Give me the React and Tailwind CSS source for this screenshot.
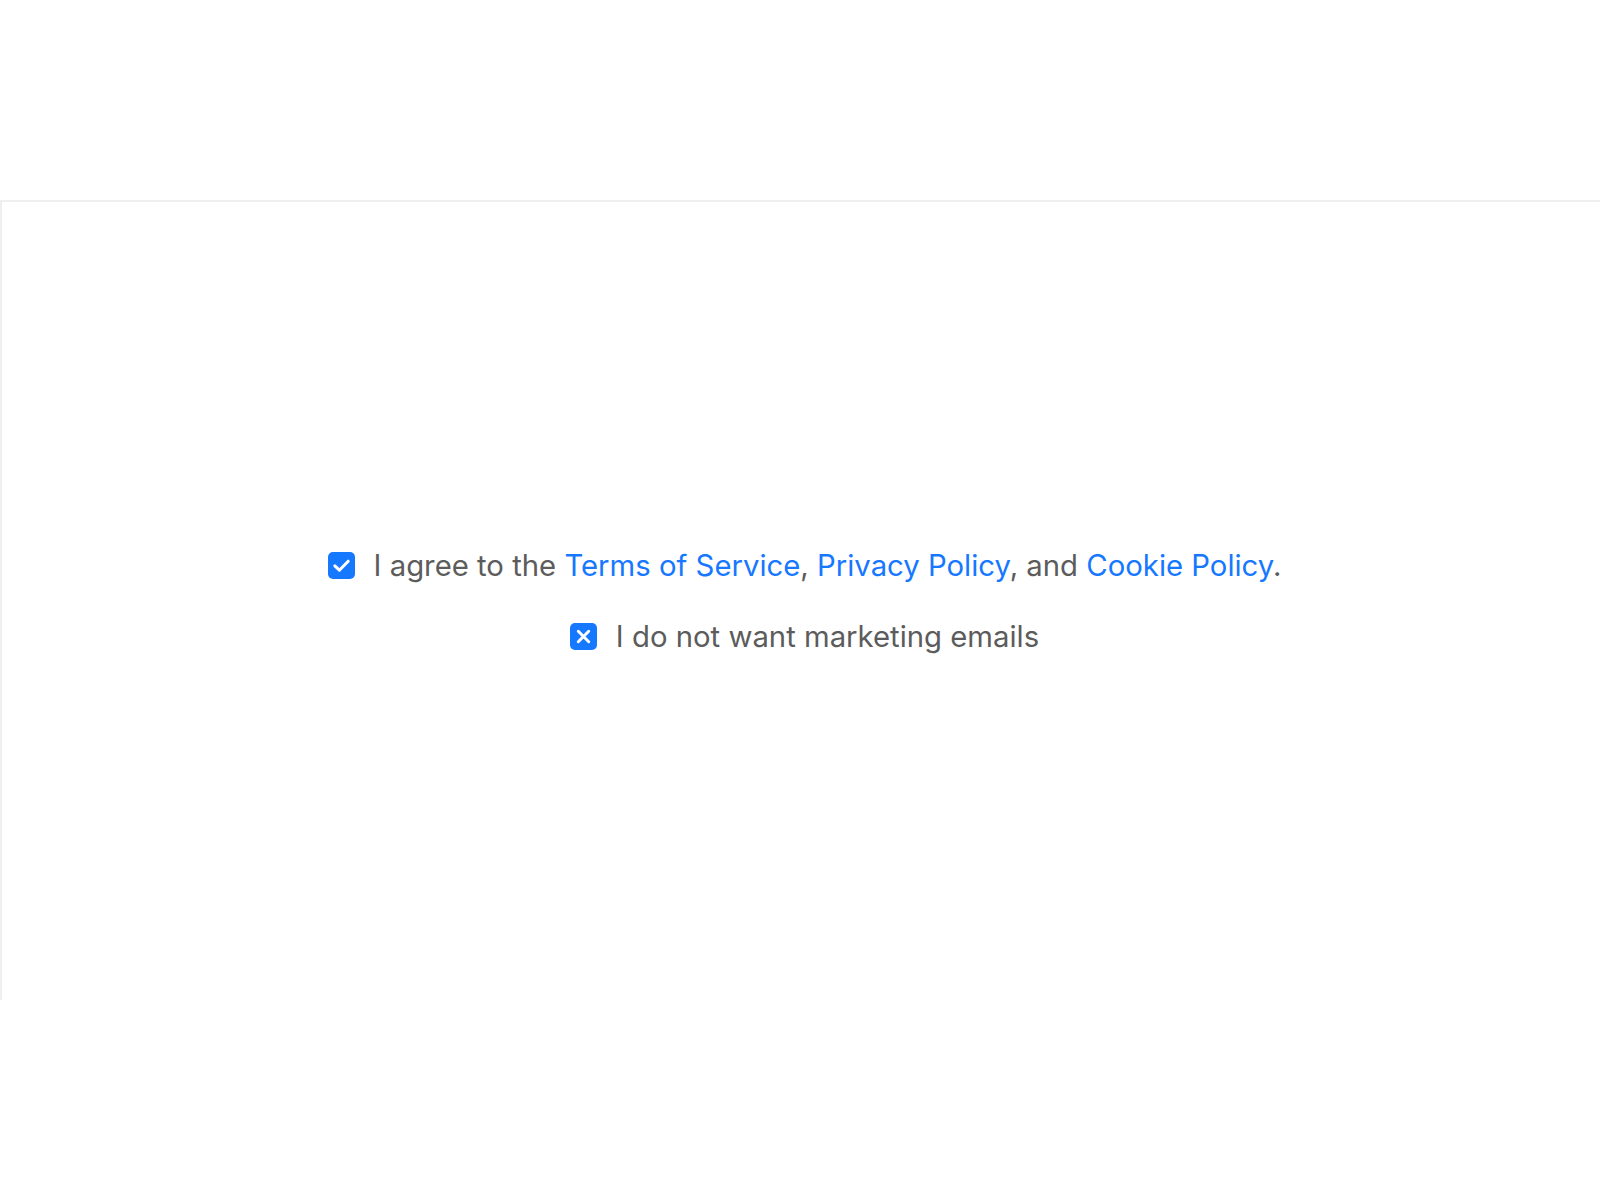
function Box({ kind }) {
  return (
    <span className="flex h-[27px] w-[27px] shrink-0 items-center justify-center rounded-[5px] bg-[#1677ff]">
      {kind === 'check' ? (
        <svg width="27" height="27" viewBox="0 0 27 27" fill="none">
          <path d="M6.8 13.8l4.6 4.4 8.8-9" stroke="#fff" strokeWidth="3" strokeLinecap="round" strokeLinejoin="round" />
        </svg>
      ) : (
        <svg width="27" height="27" viewBox="0 0 27 27" fill="none">
          <path d="M8.3 8.3l10.4 10.4M18.7 8.3L8.3 18.7" stroke="#fff" strokeWidth="3" strokeLinecap="round" />
        </svg>
      )}
    </span>
  )
}

function Link({ children }) {
  return <a className="text-[#1677ff]">{children}</a>
}

export default function App() {
  return (
    <div className="bg-white pt-[200px] font-['Inter',sans-serif]">
      <div className="flex h-[800px] flex-col items-center justify-center gap-[27px] border-l-2 border-t-2 border-[#efefef] pl-[7px] text-[29.3px] text-[#5c5c5c]">
        <label className="flex items-center gap-[19px]">
          <Box kind="check" />
          <span>
            I agree to the <Link>Terms of Service</Link>, <Link>Privacy Policy</Link>, and <Link>Cookie Policy</Link>.
          </span>
        </label>
        <label className="flex items-center gap-[19px]">
          <Box kind="x" />
          <span>I do not want marketing emails</span>
        </label>
      </div>
    </div>
  )
}
